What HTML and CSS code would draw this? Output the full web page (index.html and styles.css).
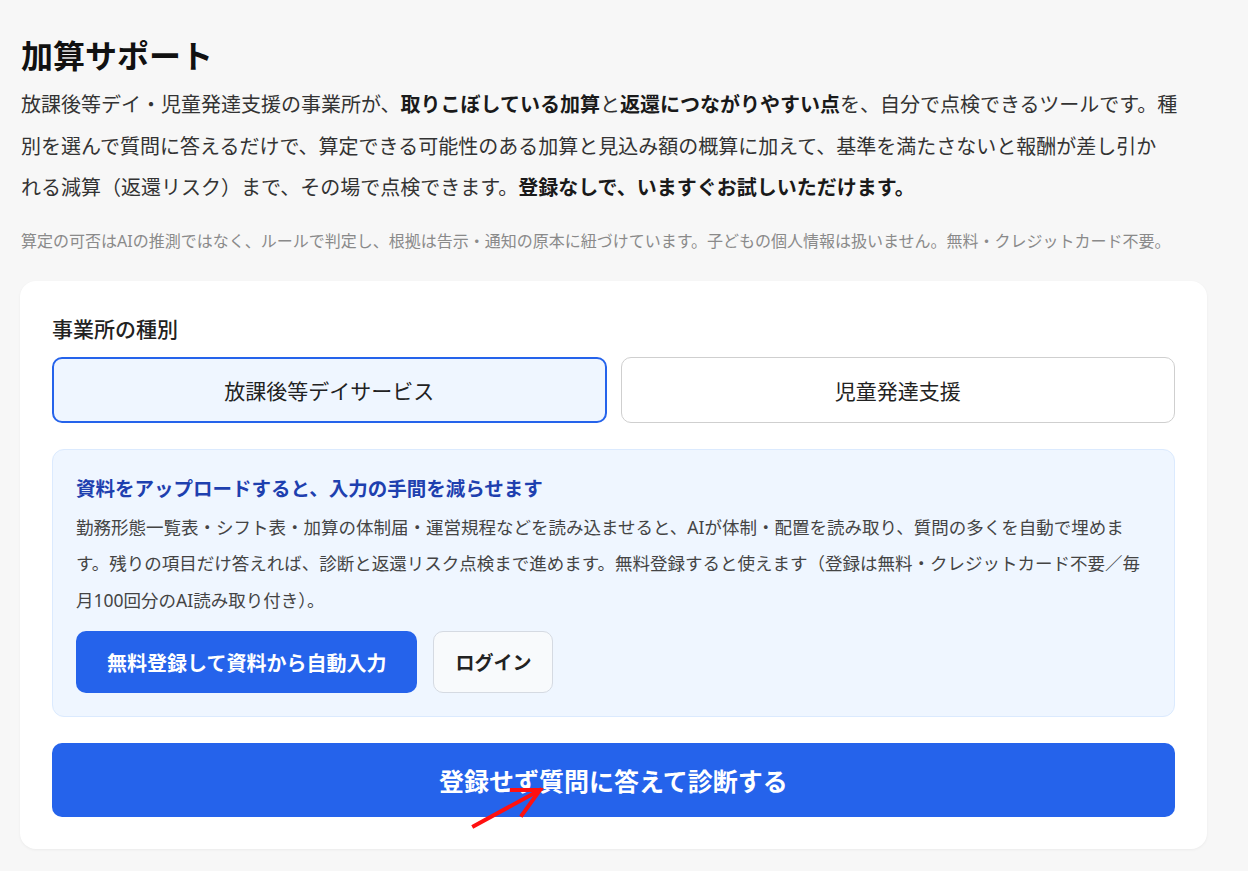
FILE: index.html
```html
<!DOCTYPE html>
<html lang="ja">
<head>
    <meta charset="UTF-8">
    <meta name="viewport" content="width=device-width, initial-scale=1.0">
    <title>加算サポート</title>
    <link rel="stylesheet" href="styles.css">
</head>
<body>
    <div class="page">
        <h1>加算サポート</h1>
        <p class="lead">放課後等デイ・児童発達支援の事業所が、<strong>取りこぼしている加算</strong>と<strong>返還につながりやすい点</strong>を、自分で点検できるツールです。種別を選んで質問に答えるだけで、算定できる可能性のある加算と見込み額の概算に加えて、基準を満たさないと報酬が差し引か<span class="keep">れる</span>減算（返還リスク）まで、その場で点検できます。<strong>登録なしで、いますぐお試しいただけます。</strong></p>
        <p class="note">算定の可否はAIの推測ではなく、ルールで判定し、根拠は告示・通知の原本に紐づけています。子どもの個人情報は扱いません。無料・クレジットカード不要。</p>

        <div class="card">
            <div class="field-label">事業所の種別</div>
            <div class="segments">
                <button class="segment selected">放課後等デイサービス</button>
                <button class="segment">児童発達支援</button>
            </div>

            <div class="upload-box">
                <h3>資料をアップロードすると、入力の手間を減らせます</h3>
                <p>勤務形態一覧表・シフト表・加算の体制届・運営規程などを読み込ませると、AIが体制・配置を読み取り、質問の多くを自動で埋めます。残りの項目だけ答えれば、診断と返還リスク点検まで進めます。無料登録すると使えます（登録は無料・クレジットカード不要／毎月100回分のAI読み取り付き）。</p>
                <div class="upload-actions">
                    <button class="btn btn-primary">無料登録して資料から自動入力</button>
                    <button class="btn btn-ghost">ログイン</button>
                </div>
            </div>

            <button class="btn-start">登録せず質問に答えて診断する</button>
        </div>
    </div>

    <!-- 赤い矢印（注釈） -->
    <svg class="annotation" width="82" height="50" viewBox="0 0 82 50">
        <path d="M8 44 L74 8 M46 8 L74 8 L56 33" fill="none" stroke="#ff1010" stroke-width="4" stroke-linecap="square" stroke-linejoin="miter"/>
    </svg>
</body>
</html>
```

FILE: styles.css
```css
body {
    margin: 0;
    background: #f7f7f7;
    font-family: "Noto Sans", "Noto Sans CJK JP", sans-serif;
    color: #222;
}

.page {
    width: 1187px;
    margin-left: 20px;
    padding-top: 35px;
    padding-bottom: 22px;
}

h1 {
    margin: 0 0 0 1px;
    font-size: 32px;
    line-height: 42px;
    font-weight: 700;
    color: #111;
}

.lead {
    margin: 7px 0 0 1px;
    width: 1174px;
    font-size: 20px;
    line-height: 41.5px;
    color: #333;
}

.lead strong {
    color: #1a1a1a;
    font-weight: 700;
}

.keep {
    white-space: nowrap;
}

.note {
    margin: 20px 0 0 1px;
    font-size: 16px;
    line-height: 24px;
    color: #8a8a8a;
}

.card {
    margin-top: 28px;
    background: #fff;
    border-radius: 16px;
    padding: 32px;
    box-shadow: 0 1px 3px rgba(0,0,0,0.05);
}

.field-label {
    font-size: 21px;
    line-height: 32px;
    font-weight: 500;
    color: #222;
    margin-bottom: 12px;
}

.segments {
    display: grid;
    grid-template-columns: 1fr 1fr;
    gap: 14px;
}

button {
    font-family: inherit;
    cursor: pointer;
}

.segment {
    box-sizing: border-box;
    height: 66px;
    background: #fff;
    border: 1.5px solid #cfcfcf;
    border-radius: 10px;
    font-size: 21px;
    color: #222;
}

.segment.selected {
    background: #eff6ff;
    border: 2.5px solid #2563eb;
}

.upload-box {
    margin-top: 26px;
    background: #eff6ff;
    border: 1px solid #dbeafe;
    border-radius: 12px;
    padding: 23px 31px 23px 23px;
}

.upload-box h3 {
    margin: 0;
    font-size: 19.5px;
    line-height: 32px;
    font-weight: 700;
    color: #1e40af;
}

.upload-box p {
    margin: 4px 0 0;
    font-size: 17.5px;
    line-height: 36.5px;
    color: #444;
}

.upload-actions {
    display: flex;
    gap: 16px;
    margin-top: 13px;
}

.btn {
    height: 62px;
    border-radius: 10px;
    font-weight: 700;
}

.btn-primary {
    background: #2563eb;
    color: #fff;
    border: none;
    font-size: 20px;
    padding: 0 31px;
}

.btn-ghost {
    background: #f8fafc;
    color: #222;
    border: 1.5px solid #d5dae2;
    font-size: 19px;
    padding: 0 21px;
}

.btn-start {
    display: block;
    width: 100%;
    height: 74px;
    margin-top: 26px;
    background: #2563eb;
    color: #fff;
    border: none;
    border-radius: 10px;
    font-size: 25px;
    font-weight: 700;
}

.annotation {
    position: absolute;
    left: 466px;
    top: 782px;
}
```
